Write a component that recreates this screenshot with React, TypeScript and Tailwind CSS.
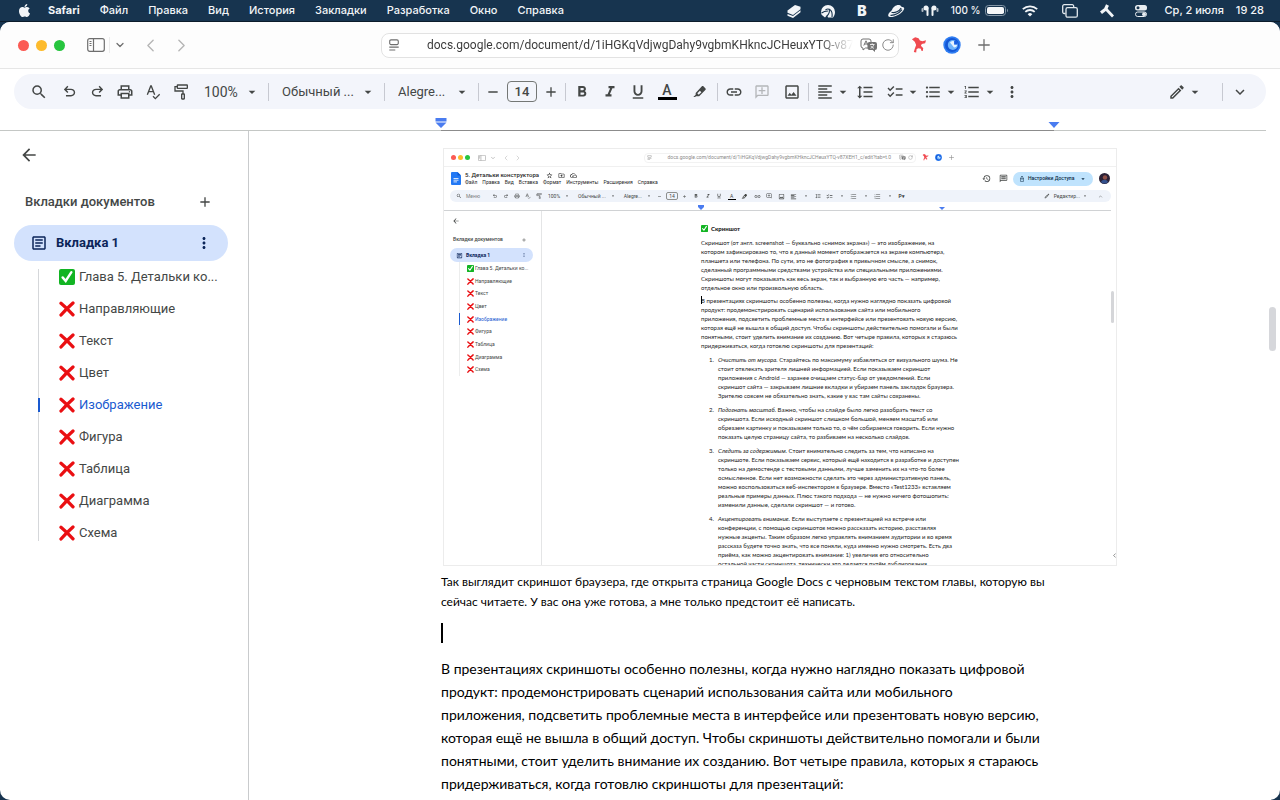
import React from 'react';
import {
  MdAdd,
  MdArrowBack,
  MdArrowDropDown,
  MdChecklist,
  MdExpandMore,
  MdFormatAlignLeft,
  MdFormatBold,
  MdFormatItalic,
  MdFormatLineSpacing,
  MdFormatListBulleted,
  MdFormatListNumbered,
  MdFormatUnderlined,
  MdHistory,
  MdLink,
  MdMoreVert,
  MdOutlineAddComment,
  MdOutlineArticle,
  MdOutlineCloudDone,
  MdOutlineComment,
  MdOutlineDriveFileMove,
  MdOutlineEdit,
  MdOutlineImage,
  MdOutlineLock,
  MdOutlinePrint,
  MdRemove,
  MdSearch,
  MdStarBorder,
} from 'react-icons/md';
import { FaApple } from 'react-icons/fa';
import { ChevronDown, ChevronLeft, ChevronRight, Plus, RotateCw } from 'lucide-react';

const menuItems = ['Файл', 'Правка', 'Вид', 'История', 'Закладки', 'Разработка', 'Окно', 'Справка'];

const outline = [
  { title: 'Глава 5. Детальки ко...', done: true },
  { title: 'Направляющие' },
  { title: 'Текст' },
  { title: 'Цвет' },
  { title: 'Изображение', active: true },
  { title: 'Фигура' },
  { title: 'Таблица' },
  { title: 'Диаграмма' },
  { title: 'Схема' },
];

const caption = [
  'Так выглядит скриншот браузера, где открыта страница Google Docs с черновым текстом главы, которую вы',
  'сейчас читаете. У вас она уже готова, а мне только предстоит её написать.',
];

const body = [
  'В презентациях скриншоты особенно полезны, когда нужно наглядно показать цифровой',
  'продукт: продемонстрировать сценарий использования сайта или мобильного',
  'приложения, подсветить проблемные места в интерфейсе или презентовать новую версию,',
  'которая ещё не вышла в общий доступ. Чтобы скриншоты действительно помогали и были',
  'понятными, стоит уделить внимание их созданию. Вот четыре правила, которых я стараюсь',
  'придерживаться, когда готовлю скриншоты для презентаций:',
];

const intro = [
  'Скриншот (от англ. screenshot — буквально «снимок экрана») — это изображение, на',
  'котором зафиксировано то, что в данный момент отображается на экране компьютера,',
  'планшета или телефона. По сути, это не фотография в привычном смысле, а снимок,',
  'сделанный программными средствами устройства или специальными приложениями.',
  'Скриншоты могут показывать как весь экран, так и выбранную его часть — например,',
  'отдельное окно или произвольную область.',
];

const rules = [
  {
    lead: 'Очистить от мусора.',
    lines: [
      ' Старайтесь по максимуму избавляться от визуального шума. Не',
      'стоит отвлекать зрителя лишней информацией. Если показываем скриншот',
      'приложения с Android — заранее очищаем статус-бар от уведомлений. Если',
      'скриншот сайта — закрываем лишние вкладки и убираем панель закладок браузера.',
      'Зрителю совсем не обязательно знать, какие у вас там сайты сохранены.',
    ],
  },
  {
    lead: 'Подогнать масштаб.',
    lines: [
      ' Важно, чтобы на слайде было легко разобрать текст со',
      'скриншота. Если исходный скриншот слишком большой, меняем масштаб или',
      'обрезаем картинку и показываем только то, о чём собираемся говорить. Если нужно',
      'показать целую страницу сайта, то разбиваем на несколько слайдов.',
    ],
  },
  {
    lead: 'Следить за содержимым.',
    lines: [
      ' Стоит внимательно следить за тем, что написано на',
      'скриншоте. Если показываем сервис, который ещё находится в разработке и доступен',
      'только на демостенде с тестовыми данными, лучше заменить их на что-то более',
      'осмысленное. Если нет возможности сделать это через административную панель,',
      'можно воспользоваться веб-инспектором в браузере. Вместо «Test1233» вставляем',
      'реальные примеры данных. Плюс такого подхода — не нужно ничего фотошопить:',
      'изменили данные, сделали скриншот — и готово.',
    ],
  },
  {
    lead: 'Акцентировать внимание.',
    lines: [
      ' Если выступаете с презентацией на встрече или',
      'конференции, с помощью скриншотов можно рассказать историю, расставляя',
      'нужные акценты. Таким образом легко управлять вниманием аудитории и во время',
      'рассказа будете точно знать, что все поняли, куда именно нужно смотреть. Есть два',
      'приёма, как можно акцентировать внимание: 1) увеличив его относительно',
      'остальной части скриншота, технически это делается путём дублирования',
    ],
  },
];

function Lines({ lines, lead }: { lines: string[]; lead?: string }) {
  return (
    <p className="whitespace-nowrap">
      {lead && <em>{lead}</em>}
      {lines.map((line, i) => (
        <React.Fragment key={i}>
          {line}
          {i < lines.length - 1 && <br />}
        </React.Fragment>
      ))}
    </p>
  );
}

/* Icons */

function UndoIcon({ className }: { className?: string }) {
  return (
    <svg viewBox="0 -960 960 960" fill="currentColor" className={className}>
      <path d="M280-200v-80h284q63 0 109.5-40T720-420q0-60-46.5-100T564-560H312l104 104-56 56-200-200 200-200 56 56-104 104h252q97 0 166.5 63T800-420q0 94-69.5 157T564-200H280Z" />
    </svg>
  );
}

function RedoIcon({ className }: { className?: string }) {
  return (
    <svg viewBox="0 -960 960 960" fill="currentColor" className={className}>
      <path d="M396-200q-97 0-166.5-63T160-420q0-94 69.5-157T396-640h252L544-744l56-56 200 200-200 200-56-56 104-104H396q-63 0-109.5 40T240-420q0 60 46.5 100T396-280h284v80H396Z" />
    </svg>
  );
}

function SpellIcon({ className }: { className?: string }) {
  return (
    <svg viewBox="0 0 24 24" fill="none" stroke="currentColor" strokeWidth="2" className={className}>
      <path d="M3.5 16 8.6 3h.8l5.1 13M5.5 11.5h7" />
      <path d="m12 18.5 3.5 3.5L22 15.5" />
    </svg>
  );
}

function PaintIcon({ className }: { className?: string }) {
  return (
    <svg viewBox="0 0 24 24" fill="none" stroke="currentColor" strokeWidth="2" className={className}>
      <rect x="6.5" y="1.5" width="15" height="5" rx="0.6" />
      <path d="M6.5 4H3v6.5h12V15" />
      <rect x="13" y="15" width="4" height="7.5" rx="0.6" />
    </svg>
  );
}

function HighlightIcon({ className }: { className?: string }) {
  return (
    <svg viewBox="0 0 24 24" className={className}>
      <path
        d="M5.5 13.5 14.5 3.8c.8-.9 2-.9 2.9-.1l2.6 2.5c.8.8.8 2 0 2.8L10.8 18.5H5.8l-1 1H2l3.5-3.5z"
        fill="currentColor"
      />
      <path d="m8 14 3.8-4 2.3 2.3-4 4z" fill="#f3f5fb" />
    </svg>
  );
}

function CheckMark({ className }: { className?: string }) {
  return (
    <svg viewBox="0 0 16 16" className={className} aria-hidden="true">
      <rect width="16" height="16" rx="2" fill="#12b423" />
      <path d="m3.6 8.4 3.1 3.6 5.7-8.8" fill="none" stroke="#fff" strokeWidth="2.4" strokeLinecap="round" />
    </svg>
  );
}

function CrossMark({ className }: { className?: string }) {
  return (
    <svg viewBox="0 0 16 16" className={className} aria-hidden="true">
      <path d="M2 2.2C6 5.5 10.5 10 14 13.8M14 2C10 5.500 5.5 10 2 14" fill="none" stroke="#ea0f12" strokeWidth="3.3" strokeLinecap="round" />
    </svg>
  );
}

function SidebarIcon({ className }: { className?: string }) {
  return (
    <svg viewBox="0 0 18 14" fill="none" stroke="currentColor" strokeWidth="1.2" className={className}>
      <rect x="0.7" y="0.7" width="16.6" height="12.6" rx="2" />
      <path d="M6.5 1v12M2.5 3.5h2M2.5 5.5h2M2.5 7.5h2" />
    </svg>
  );
}

function BirdIcon({ className }: { className?: string }) {
  return (
    <svg viewBox="0 0 16 18" fill="#f04a50" className={className}>
      <path d="M.5 2.5 4 .3l3.5 1 1.5 2.5 2.5.7 4-1-1 3-3.5.8-1 2 2.5 2.5-.5 3-1.5-.3-.5-2-2.5-.7-2 1-.5 3.5-2.5-.5 1.2-4L5 8.5 3.5 5z" />
    </svg>
  );
}

function OrbIcon({ className }: { className?: string }) {
  return (
    <svg viewBox="0 0 18 18" className={className}>
      <circle cx="9" cy="9" r="8.7" fill="#2e7df2" />
      <circle cx="9" cy="9" r="7" fill="#1458d6" />
      <circle cx="9.8" cy="9" r="5" fill="#6db4fc" />
      <path d="M7 6.5a3.5 3.5 0 0 1 4-1.300v3.3h3.2A3.5 3.5 0 0 1 11 11.5z" fill="#e6f3ff" />
      <path d="M11.2 4.8h2.3l1 1.5v2.2h-3.3z" fill="#1a5fe0" />
    </svg>
  );
}

function TranslateIcon({ className }: { className?: string }) {
  return (
    <svg viewBox="0 0 18 14" className={className}>
      <path d="M3 1h6a2 2 0 0 1 2 2v5a2 2 0 0 1-2 2H5.5L3 12v-2a2 2 0 0 1-2-2V3a2 2 0 0 1 2-2z" fill="#fff" stroke="#737373" />
      <path d="M3.8 7.5 6 2.8l2.2 4.7M4.6 6h2.8" fill="none" stroke="#737373" />
      <path d="M9.5 4H15a2 2 0 0 1 2 2v4a2 2 0 0 1-2 2v2l-2.3-2H9.5a2 2 0 0 1-2-2V6a2 2 0 0 1 2-2z" fill="#737373" />
      <path d="M10 6.5h4.5M12.2 5.3v1.2M10.5 10.3c2-.8 3-2 3.3-3.8M10.8 7.8c.8 1.5 1.8 2.1 3.2 2.5" fill="none" stroke="#fff" strokeWidth="0.8" />
    </svg>
  );
}

function ReaderIcon({ className }: { className?: string }) {
  return (
    <svg viewBox="0 0 12 14" fill="none" stroke="currentColor" strokeWidth="1.3" className={className}>
      <rect x="1" y="1" width="10" height="5.5" rx="1.5" />
      <path d="M.5 9.5h11M.5 12.8h7" />
    </svg>
  );
}

function StackIcon() {
  return (
    <svg viewBox="0 0 16 16" className="size-4" fill="#f2f5f8">
      <path d="M1.5 7.5 9 2l5.5 1.8v2.5L7 12l-5.5-2.2z" />
      <path d="m1.5 11 5.5 2 7.5-5.8v2L7 15l-5.5-2.3z" />
    </svg>
  );
}

function SwirlIcon() {
  return (
    <svg viewBox="0 0 16 16" className="size-4">
      <path d="M1 9a7 7 0 1 1 14 0c0 2.5-1 4.5-2 5.5H8L7 12l-2 2.5-2.5-2C1.5 12 1 11 1 9z" fill="#f2f5f8" />
      <path d="M5.5 7c3-2.5 7.5 0 6.5 7M9 6c1 2.5 0 5-2 7M1.500 10C3.5 8.5 5 8 8 8" fill="none" stroke="#17344f" strokeWidth="1.1" />
    </svg>
  );
}

function SaucerIcon() {
  return (
    <svg viewBox="0 0 18 16" className="h-4 w-[18px]">
      <path d="M5 7c1-3.5 5-6 8-4.8 1 .4 1.5 1.3 1.5 1.8 3 0 3.5 1.5 1.5 4-3 3.5-8 6-12 6-3 0-3.5-1.5-2-4z" fill="#f2f5f8" />
      <path d="M4.5 9.2c3 1.3 8-1 9.7-4.2M3.5 12.3c4 .2 8.5-2 11.5-5.6" fill="none" stroke="#17344f" strokeWidth="1.2" />
    </svg>
  );
}

function PodsIcon() {
  return (
    <svg viewBox="0 0 18 14" className="h-3.5 w-[18px]" fill="#f2f5f8">
      <circle cx="5" cy="4" r="2.5" />
      <rect x="5.5" y="3" width="2" height="9" rx="1" />
      <circle cx="13" cy="4" r="2.5" />
      <rect x="10.5" y="3" width="2" height="9" rx="1" />
      <rect x="0.5" y="4" width="2" height="4" rx="1" opacity="0.7" />
      <rect x="15.5" y="4" width="2" height="4" rx="1" opacity="0.7" />
    </svg>
  );
}

function BatteryIcon() {
  return (
    <svg viewBox="0 0 24 11" className="h-[11px] w-6">
      <rect x="0.5" y="0.5" width="20" height="10" rx="3" fill="none" stroke="#8295a6" />
      <rect x="2" y="2" width="17" height="7" rx="1.8" fill="#f5f7f9" />
      <path d="M22 3.8c1.3.4 1.3 3 0 3.4z" fill="#8295a6" />
    </svg>
  );
}

function WifiIcon() {
  return (
    <svg viewBox="0 0 16 12" className="h-3 w-4" fill="none" stroke="#f2f5f8" strokeWidth="1.8">
      <path d="M.8 4.2a10.5 10.5 0 0 1 14.4 0M3.3 6.9a6.8 6.8 0 0 1 9.4 0" />
      <path d="M8 11.5 5.7 9.2a3.3 3.3 0 0 1 4.6 0z" fill="#f2f5f8" stroke="none" />
    </svg>
  );
}

function WindowsIcon() {
  return (
    <svg viewBox="0 0 16 14" className="h-3.5 w-4" fill="none" stroke="#e3e9ee" strokeWidth="1.3">
      <path d="M3.5 9.5H2.2A1.5 1.5 0 0 1 .7 8V2.2A1.5 1.5 0 0 1 2.2.7h8A1.5 1.5 0 0 1 11.7 2.2v1" />
      <rect x="4" y="3.7" width="11.3" height="9.5" rx="1.5" />
    </svg>
  );
}

function HammerIcon() {
  return (
    <svg viewBox="0 0 14 14" className="size-3.5" fill="none" stroke="#f2f5f8">
      <path d="M7.5 1 5.5 5.2 1 8.8" strokeWidth="3.2" />
      <path d="m6 5 7 7.5" strokeWidth="2.8" />
    </svg>
  );
}

function ControlIcon() {
  return (
    <svg viewBox="0 0 12 12" className="size-3">
      <rect width="12" height="5.5" rx="2.5" fill="#e9eef2" />
      <circle cx="3" cy="2.7" r="1.5" fill="#17344f" />
      <rect x="0.5" y="7" width="11" height="4.5" rx="2.2" fill="none" stroke="#e9eef2" />
      <circle cx="9" cy="9.2" r="1.9" fill="#e9eef2" />
    </svg>
  );
}

/* Toolbar parts */

function ToolButton({ label, className = 'w-7', children }: { label: string; className?: string; children: React.ReactNode }) {
  return (
    <button aria-label={label} className={`flex h-7 shrink-0 items-center justify-center ${className}`}>
      {children}
    </button>
  );
}

function SplitButton({ label, className = '', children }: { label: string; className?: string; children: React.ReactNode }) {
  return (
    <button aria-label={label} className={`flex shrink-0 items-center gap-px ${className}`}>
      {children}
      <MdArrowDropDown className="size-4" />
    </button>
  );
}

function ToolSelect({ label, value, className = '', pad = 'pl-[13px] text-[13px]' }: { label: string; value: string; className?: string; pad?: string }) {
  return (
    <label className={`relative flex shrink-0 items-center ${className}`}>
      <select aria-label={label} className={`w-full appearance-none bg-transparent outline-none ${pad}`}>
        <option>{value}</option>
      </select>
      <MdArrowDropDown className="pointer-events-none absolute right-2 size-4" />
    </label>
  );
}

function Divider({ className = '' }: { className?: string }) {
  return <span className={`h-[18px] w-px shrink-0 bg-[#c7c9d1] ${className}`} />;
}

function MenuBar() {
  return (
    <nav className="flex h-[22px] shrink-0 items-center border-b border-[#0c1c2b] bg-[#17344f] pr-4 pl-[17px] font-['Inter',sans-serif] text-[11px] font-medium whitespace-nowrap text-[#f2f5f8]">
      <FaApple className="mr-4 size-[15px]" />
      <div className="flex items-center gap-5">
        <button className="font-bold">Safari</button>
        {menuItems.map((item) => (
          <button key={item}>{item}</button>
        ))}
      </div>
      <div className="ml-auto flex items-center">
        <span className="flex w-[34px] justify-center"><StackIcon /></span>
        <span className="flex w-[34px] justify-center"><SwirlIcon /></span>
        <span className="flex w-[34px] justify-center text-sm font-black">B</span>
        <span className="flex w-[34px] justify-center"><SaucerIcon /></span>
        <span className="flex w-[34px] justify-center"><PodsIcon /></span>
        <span className="mr-1 ml-1 text-[10px]">100 %</span>
        <BatteryIcon />
        <span className="flex w-[42px] justify-center"><WifiIcon /></span>
        <span className="flex w-[38px] justify-center"><WindowsIcon /></span>
        <span className="flex w-9 justify-center"><HammerIcon /></span>
        <span className="mr-2 flex w-8 justify-center"><ControlIcon /></span>
        <span>Ср, 2 июля</span>
        <span className="ml-3">19 28</span>
      </div>
    </nav>
  );
}

function BrowserBar() {
  return (
    <header className="grid h-[47px] shrink-0 grid-cols-[1fr_518px_1fr] items-center border-b border-[#e6e6e6] bg-[#fdfdfd] text-[#6e6e6e]">
      <div className="flex items-center pl-[18px]">
        <span className="size-[11px] rounded-full bg-[#fb5b54]" />
        <span className="ml-[7px] size-[11px] rounded-full bg-[#fdbb2d]" />
        <span className="ml-[7px] size-[11px] rounded-full bg-[#27c53f]" />
        <button aria-label="Боковая панель" className="ml-[22px]"><SidebarIcon className="h-3.5 w-[18px]" /></button>
        <span className="ml-1 h-4 w-px bg-[#ececec]" />
        <button aria-label="Группы вкладок" className="ml-1"><ChevronDown className="size-3" strokeWidth={2.5} /></button>
        <button aria-label="Назад" className="ml-3.5 text-[#b5b5b5]"><ChevronLeft className="size-[21px]" strokeWidth={1.6} /></button>
        <button aria-label="Вперёд" className="ml-2.5 text-[#b5b5b5]"><ChevronRight className="size-[21px]" strokeWidth={1.6} /></button>
      </div>
      <div className="flex h-[25px] items-center rounded-lg border border-[#e2e2e2] bg-white pr-[3px] pl-1.5">
        <ReaderIcon className="h-3 w-3 shrink-0" />
        <input
          readOnly
          aria-label="Адрес"
          value="docs.google.com/document/d/1iHGKqVdjwgDahy9vgbmKHkncJCHeuxYTQ-v87"
          className="ml-[27px] w-[426px] overflow-hidden bg-transparent font-['Roboto',sans-serif] text-xs text-[#3c3c3c] outline-none [mask-image:linear-gradient(to_right,black_92%,transparent)]"
        />
        <TranslateIcon className="ml-auto h-3.5 w-[18px] shrink-0" />
        <button aria-label="Обновить" className="ml-[3px]"><RotateCw className="size-3.5 text-[#8a8a8a]" strokeWidth={1.7} /></button>
      </div>
      <div className="flex items-center pl-3">
        <BirdIcon className="h-[17px] w-4" />
        <OrbIcon className="ml-4 size-[18px]" />
        <button aria-label="Новая вкладка" className="ml-3.5"><Plus className="size-[18px]" strokeWidth={1.7} /></button>
      </div>
    </header>
  );
}

function Toolbar() {
  return (
    <div className="mx-3.5 mt-[5px] flex h-[35px] shrink-0 items-center rounded-full bg-[#f3f5fb] pr-3 pl-2 font-['Roboto',sans-serif] text-[#444746]">
      <ToolButton label="Поиск" className="w-[33px]"><MdSearch className="size-[18px]" /></ToolButton>
      <ToolButton label="Отменить"><UndoIcon className="size-[17px]" /></ToolButton>
      <ToolButton label="Повторить"><RedoIcon className="size-[17px]" /></ToolButton>
      <ToolButton label="Печать"><MdOutlinePrint className="size-[18px]" /></ToolButton>
      <ToolButton label="Проверка правописания"><SpellIcon className="size-4" /></ToolButton>
      <ToolButton label="Копировать форматирование"><PaintIcon className="size-4" /></ToolButton>
      <ToolSelect label="Масштаб" value="100%" className="w-[73px]" pad="pl-[9px] text-sm" />
      <Divider />
      <ToolSelect label="Стиль" value="Обычный ..." className="w-[115px]" />
      <Divider />
      <ToolSelect label="Шрифт" value="Alegre..." className="w-[93px]" />
      <Divider />
      <ToolButton label="Уменьшить"><MdRemove className="size-4" /></ToolButton>
      <input
        aria-label="Размер шрифта"
        defaultValue="14"
        className="h-[21px] w-[30px] rounded-[4px] border border-[#747775] bg-transparent text-center text-[13px] font-medium outline-none"
      />
      <ToolButton label="Увеличить"><MdAdd className="size-4" /></ToolButton>
      <Divider className="mr-0.5" />
      <ToolButton label="Полужирный"><MdFormatBold className="size-[18px]" /></ToolButton>
      <ToolButton label="Курсив"><MdFormatItalic className="size-[18px]" /></ToolButton>
      <ToolButton label="Подчёркнутый"><MdFormatUnderlined className="size-[18px]" /></ToolButton>
      <ToolButton label="Цвет текста" className="w-[30px] flex-col">
        <span className="text-sm leading-[14px] font-medium">A</span>
        <span className="h-[3px] w-[19px] bg-black" />
      </ToolButton>
      <ToolButton label="Цвет выделения" className="w-[35px]"><HighlightIcon className="size-4" /></ToolButton>
      <Divider className="mr-0.5" />
      <ToolButton label="Ссылка"><MdLink className="size-[18px]" /></ToolButton>
      <ToolButton label="Комментарий"><MdOutlineAddComment className="size-4 -scale-x-100 text-[#b4b6b9]" /></ToolButton>
      <ToolButton label="Изображение" className="w-8"><MdOutlineImage className="size-[18px]" /></ToolButton>
      <Divider className="mr-[7px]" />
      <SplitButton label="Выравнивание"><MdFormatAlignLeft className="size-[18px]" /></SplitButton>
      <ToolButton label="Интервал"><MdFormatLineSpacing className="size-[18px]" /></ToolButton>
      <SplitButton label="Контрольный список" className="ml-[7px]"><MdChecklist className="size-[18px]" /></SplitButton>
      <SplitButton label="Маркированный список" className="ml-[3px]"><MdFormatListBulleted className="size-[18px]" /></SplitButton>
      <SplitButton label="Нумерованный список" className="ml-1"><MdFormatListNumbered className="size-[18px]" /></SplitButton>
      <ToolButton label="Ещё"><MdMoreVert className="size-[18px]" /></ToolButton>
      <SplitButton label="Режим" className="mr-[19px] ml-auto"><MdOutlineEdit className="size-[18px]" /></SplitButton>
      <Divider className="mr-[3px]" />
      <ToolButton label="Скрыть меню"><MdExpandMore className="size-[18px]" /></ToolButton>
    </div>
  );
}

function Ruler() {
  return (
    <div className="mr-3.5 h-[22px] shrink-0 border-b border-[#c4c7c5] pl-[441px]">
      <div className="-mb-px flex h-[22px] w-[613px] items-end justify-between border-b border-[#8c8c8c] pb-0.5">
        <svg viewBox="0 0 12 10" className="-ml-1.5 h-2.5 w-3 fill-[#4a7cf0]">
          <path d="M.5 0h11v3.5H.5zM.5 4.5h11L6 10z" />
        </svg>
        <svg viewBox="0 0 12 6" className="-mr-1.5 h-1.5 w-3 fill-[#4a7cf0]">
          <path d="M.5 0h11L6 6z" />
        </svg>
      </div>
    </div>
  );
}

function Sidebar() {
  return (
    <aside className="w-[249px] shrink-0 border-r border-[#c9cbcd] pt-3.5 font-['Roboto',sans-serif] text-[13px] text-[#444746]">
      <button aria-label="Закрыть" className="ml-[19px] block"><MdArrowBack className="size-5" /></button>
      <div className="mt-[23px] flex h-7 items-center justify-between pr-[35px] pl-[25px]">
        <h2 className="font-medium">Вкладки документов</h2>
        <button aria-label="Добавить вкладку"><MdAdd className="size-4" /></button>
      </div>
      <div className="mt-[9px] mr-5 ml-3.5 flex h-9 items-center rounded-full bg-[#d3e2fd] pr-[15px] pl-4 text-[#0b2559]">
        <MdOutlineArticle className="size-[18px]" />
        <span className="ml-2 font-bold">Вкладка 1</span>
        <button aria-label="Параметры вкладки" className="ml-auto"><MdMoreVert className="size-[18px]" /></button>
      </div>
      <ul className="relative">
        <li className="absolute top-2 bottom-2 left-[38px] w-px bg-[#d5d7da]" aria-hidden="true" />
        {outline.map((item) => (
          <li key={item.title} className={`relative flex h-8 items-center pl-[59px] ${item.active ? 'text-[#1a5ad0]' : ''}`}>
            {item.active && <span className="absolute left-[38px] h-3.5 w-0.5 bg-[#1a5ad0]" />}
            {item.done ? <CheckMark className="size-4" /> : <CrossMark className="size-4" />}
            <a href="#" className="ml-1">{item.title}</a>
          </li>
        ))}
      </ul>
    </aside>
  );
}

/* Scaled down browser window shown as the illustration inside the document */
function Illustration() {
  return (
    <figure className="ml-0.5 flex h-[418px] w-[674px] flex-col overflow-hidden border border-[#ececec] bg-white font-['Roboto',sans-serif] text-[5px] leading-[7px] whitespace-nowrap text-[#444746]">
      <div className="flex h-[18px] shrink-0 items-center border-b border-[#f0f0f0] px-[7px] text-[#8a8a8a]">
        <span className="size-[5px] rounded-full bg-[#fb5b54]" />
        <span className="ml-0.5 size-[5px] rounded-full bg-[#fdbb2d]" />
        <span className="ml-0.5 size-[5px] rounded-full bg-[#27c53f]" />
        <SidebarIcon className="ml-2 h-1.5 w-2" />
        <ChevronDown className="ml-1 size-1.5" />
        <ChevronLeft className="ml-1.5 size-2 text-[#c4c4c4]" />
        <ChevronRight className="ml-1 size-2 text-[#c4c4c4]" />
        <div className="ml-[122px] flex h-2.5 w-[272px] items-center rounded border border-[#f2f2f2] px-0.5">
          <ReaderIcon className="size-[5px]" />
          <span className="mr-2 ml-auto">docs.google.com/document/d/1iHGKqVdjwgDahy9vgbmKHkncJCHeuxYTQ-v87XEH1_c/edit?tab=t.0</span>
          <TranslateIcon className="size-[7px]" />
          <RotateCw className="ml-0.5 size-[5px]" />
        </div>
        <BirdIcon className="ml-1.5 size-[7px]" />
        <OrbIcon className="ml-1.5 size-[7px]" />
        <Plus className="ml-1.5 size-[7px]" />
      </div>
      <div className="flex h-[23px] shrink-0 items-center pr-1.5 pl-[7px]">
        <svg viewBox="0 0 10 13" className="h-[13px] w-2.5">
          <path d="M1 0h5.5L10 3.5V12a1 1 0 0 1-1 1H1a1 1 0 0 1-1-1V1a1 1 0 0 1 1-1z" fill="#2379f4" />
          <path d="M2.5 6.5h5M2.5 8.2h5M2.5 9.9h3.5" stroke="#fff" strokeWidth="0.8" />
          <path d="M6.5 0 10 3.5H6.5z" fill="#0d5bd0" />
        </svg>
        <div className="ml-1">
          <div className="flex items-center gap-[5px] text-[6px] leading-2 font-medium text-[#1f1f1f]">
            <span className="mr-0.5">5. Детальки конструктора</span>
            <MdStarBorder className="size-[7px]" />
            <MdOutlineDriveFileMove className="size-[7px]" />
            <MdOutlineCloudDone className="size-[7px]" />
          </div>
          <div className="flex gap-[5px] text-[#1f1f1f]">
            {['Файл', 'Правка', 'Вид', 'Вставка', 'Формат', 'Инструменты', 'Расширения', 'Справка'].map((item) => (
              <span key={item}>{item}</span>
            ))}
          </div>
        </div>
        <MdHistory className="ml-auto size-[9px]" />
        <MdOutlineComment className="ml-2 size-[9px] -scale-x-100" />
        <span className="ml-[5px] flex h-3.5 w-20 items-center rounded-full bg-[#bfe3fd] px-1.5 text-[5px] font-medium text-[#0b2a45]">
          <MdOutlineLock className="mr-[3px] size-1.5" />
          Настройки Доступа
          <MdArrowDropDown className="ml-auto size-2" />
        </span>
        <svg viewBox="0 0 11 11" className="ml-1.5 size-[11px]">
          <circle cx="5.5" cy="5.5" r="5.5" fill="#2b2136" />
          <circle cx="6" cy="4.5" r="2.2" fill="#8f5148" />
          <path d="M2 9c1-3 6-3 7 0-2 2-5 2-7 0z" fill="#33508c" />
        </svg>
      </div>
      <div className="mr-[5px] ml-1.5 flex h-3 shrink-0 items-center rounded-full bg-[#eff3fa] pl-1.5 text-[5px]">
        <MdSearch className="size-1.5" />
        <span className="ml-1 w-[26px] text-[#7c7f80]">Меню</span>
        <div className="flex w-[50px] items-center justify-between">
          <UndoIcon className="size-1.5" />
          <RedoIcon className="size-1.5" />
          <MdOutlinePrint className="size-1.5" />
          <SpellIcon className="size-1.5" />
          <PaintIcon className="size-1.5" />
        </div>
        <span className="ml-1.5">100%</span>
        <MdArrowDropDown className="ml-1 size-1.5" />
        <span className="ml-2">Обычный ...</span>
        <MdArrowDropDown className="ml-1 size-1.5" />
        <span className="ml-2">Alegre...</span>
        <MdArrowDropDown className="ml-1 size-1.5" />
        <MdRemove className="ml-[5px] size-[5px]" />
        <span className="mx-1 w-3 rounded-[2px] border border-[#8d8f8e] text-center leading-[6px]">14</span>
        <MdAdd className="size-[5px]" />
        <div className="ml-1.5 flex w-[212px] items-center justify-between">
          <MdFormatBold className="size-1.5" />
          <MdFormatItalic className="size-1.5" />
          <MdFormatUnderlined className="size-1.5" />
          <span className="w-2 border-b border-black text-center leading-[6px]">A</span>
          <HighlightIcon className="size-[7px]" />
          <MdLink className="size-[7px]" />
          <MdOutlineAddComment className="size-1.5" />
          <MdOutlineImage className="size-[7px]" />
          <MdFormatAlignLeft className="size-[7px]" />
          <MdArrowDropDown className="size-1.5" />
          <MdFormatLineSpacing className="size-1.5" />
          <MdChecklist className="size-[7px]" />
          <MdArrowDropDown className="size-1.5" />
          <MdFormatListBulleted className="size-[7px]" />
          <MdArrowDropDown className="size-1.5" />
          <MdFormatListNumbered className="size-[7px]" />
          <MdArrowDropDown className="size-1.5" />
          <span className="font-bold">P▾</span>
        </div>
        <MdOutlineEdit className="ml-auto size-1.5" />
        <span className="ml-1">Редактир...</span>
        <MdArrowDropDown className="ml-0.5 size-1.5" />
        <ChevronDown className="mr-2 ml-2.5 size-[5px] rotate-180" />
      </div>
      <div className="mr-[5px] flex h-[9px] shrink-0 items-end border-b border-[#d0d2d4] pl-[254px]">
        <div className="flex w-[247px] items-end justify-between">
          <svg viewBox="0 0 6 5" className="h-[5px] w-1.5 fill-[#4a7cf0]"><path d="M0 0h6v2L3 5 0 2z" /></svg>
          <svg viewBox="0 0 6 3" className="h-[3px] w-1.5 fill-[#4a7cf0]"><path d="M0 0h6L3 3z" /></svg>
        </div>
      </div>
      <div className="flex min-h-0 flex-1">
        <div className="w-[98px] shrink-0 border-r border-[#e4e5e6] pt-1.5">
          <MdArrowBack className="ml-2 size-2" />
          <div className="mt-[11px] flex items-center justify-between pr-3.5 pl-[9px]">
            <span className="font-medium">Вкладки документов</span>
            <MdAdd className="size-1.5" />
          </div>
          <div className="mt-[5px] mr-2 ml-1.5 flex h-3.5 items-center rounded-full bg-[#d3e2fd] px-1.5 text-[#0b2559]">
            <MdOutlineArticle className="size-[7px]" />
            <span className="ml-[3px] text-[5px] font-bold">Вкладка 1</span>
            <MdMoreVert className="ml-auto size-1.5" />
          </div>
          <div className="ml-[15px] flex h-[114px] flex-col">
            {outline.map((item) => (
              <div
                key={item.title}
                className={`flex flex-1 items-center border-l pl-[7px] ${item.active ? 'border-[#1a5ad0] text-[#1a5ad0]' : 'border-[#eceded]'}`}
              >
                {item.done ? <CheckMark className="mr-px size-[7px]" /> : <CrossMark className="mr-px size-[7px]" />}
                {item.title}
              </div>
            ))}
          </div>
        </div>
        <div className="flex flex-1 justify-between overflow-hidden pl-[159px]">
          <div className="pt-[13px] font-['Lato','Noto_Sans',sans-serif] text-[6px] leading-[9px] text-[#222]">
            <h3 className="flex items-center gap-[3px] font-black"><CheckMark className="size-[7px]" />Скриншот</h3>
            <div className="mt-[5px]"><Lines lines={intro} /></div>
            <div className="relative mt-1">
              <span className="absolute top-0 left-0 h-2 w-px bg-black" />
              <Lines lines={body} />
            </div>
            <ol className="mt-[5px] flex flex-col gap-[5px]">
              {rules.map((rule, i) => (
                <li key={rule.lead} className="flex">
                  <span className="w-[17px] pl-2">{i + 1}.</span>
                  <Lines lead={rule.lead} lines={rule.lines} />
                </li>
              ))}
            </ol>
          </div>
          <div className="flex w-[5px] flex-col justify-between pt-20 pb-1.5">
            <span className="h-8 w-[3px] rounded-full bg-[#d5d6d9]" />
            <ChevronLeft className="size-[7px]" />
          </div>
        </div>
      </div>
    </figure>
  );
}

export default function App() {
  return (
    <div className="flex h-screen flex-col overflow-hidden bg-[#17344f]">
      <MenuBar />
      <div className="flex min-h-0 flex-1 flex-col overflow-hidden rounded-[10px] bg-white">
        <BrowserBar />
        <Toolbar />
        <Ruler />
        <div className="relative flex min-h-0 flex-1">
          <Sidebar />
          <main className="min-w-0 flex-1 overflow-hidden pt-[17px] pl-48 font-['Lato','Noto_Sans',sans-serif] text-black">
            <Illustration />
            <div className="mt-1.5 text-xs leading-5"><Lines lines={caption} /></div>
            <div className="mt-[11px] h-5 w-0.5 bg-black" />
            <div className="mt-3.5 text-sm leading-[23px]"><Lines lines={body} /></div>
          </main>
          <span className="absolute top-44 right-1 h-11 w-[7px] rounded-full bg-[#d6d7db]" />
        </div>
      </div>
    </div>
  );
}
